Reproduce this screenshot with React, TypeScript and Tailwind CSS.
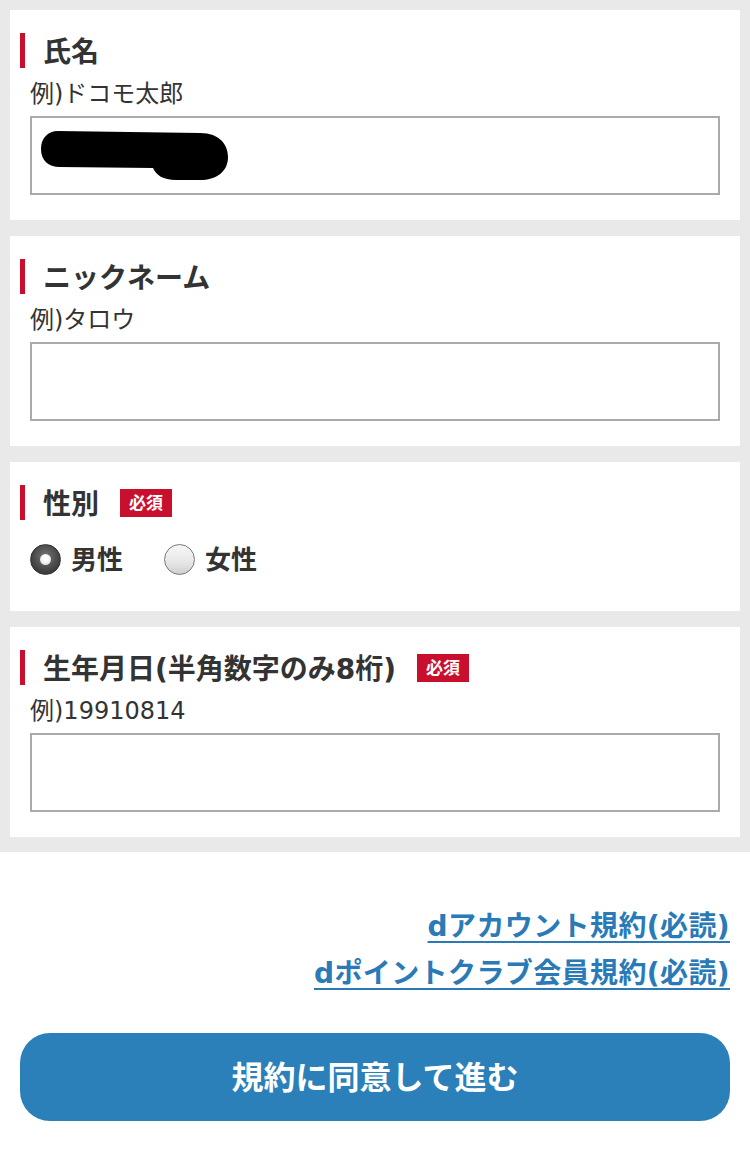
import React from "react";

const font = { fontFamily: '"DejaVu Sans", "Noto Sans CJK JP", "Noto Sans", sans-serif' };

function Title({ text, required }: { text: string; required?: boolean }) {
  return (
    <div className="flex h-[35px] items-center">
      <div className="h-[35px] w-[5px] bg-[#c8102e]" />
      <div className="ml-[18px] pt-[5px] text-[28px] font-bold leading-[30px] text-[#333]">{text}</div>
      {required && (
        <div className="ml-[21px] flex h-[28px] w-[52px] items-center justify-center bg-[#c8102e] pt-[2px] text-[17px] font-bold text-white">
          必須
        </div>
      )}
    </div>
  );
}

function Example({ text }: { text: string }) {
  return <div className="mt-[14px] pl-[10px] text-[24px] leading-[25px] text-[#333]">{text}</div>;
}

function Input({ children }: { children?: React.ReactNode }) {
  return (
    <div className="mx-[10px] mt-[9px] flex h-[79px] items-center border-2 border-[#aaaaaa] bg-white pl-[8px]">
      {children}
    </div>
  );
}

function Radio({ checked, label }: { checked?: boolean; label: string }) {
  return (
    <div className="flex h-[32px] items-center">
      {checked ? (
        <div className="flex h-[31px] w-[31px] items-center justify-center rounded-full border border-[#333] bg-[radial-gradient(circle_at_50%_40%,#777_0%,#444_60%,#2a2a2a_100%)]">
          <div className="h-[11px] w-[11px] rounded-full bg-[radial-gradient(circle_at_50%_40%,#fff_30%,#ccc_100%)]" />
        </div>
      ) : (
        <div className="h-[31px] w-[31px] rounded-full border border-[#777] bg-[linear-gradient(180deg,#f7f7f7_0%,#e6e6e6_60%,#cfcfcf_100%)]" />
      )}
      <span className="ml-[10px] pt-[1px] text-[26px] font-bold leading-[30px] text-[#333]">{label}</span>
    </div>
  );
}

export default function App() {
  return (
    <div style={font} className="w-[750px] min-h-[1167px] bg-white">
      <div className="flex flex-col gap-[16px] bg-[#e9e9e9] px-[10px] pb-[15px] pt-[10px]">
        <div className="bg-white px-[10px] pb-[25px] pt-[23px]">
          <Title text="氏名" />
          <Example text="例)ドコモ太郎" />
          <Input>
            <svg width="190" height="52" viewBox="0 0 190 52">
              <path
                d="M18 1 L160 3 C180 3 188 15 188 27 C188 42 176 50 160 50 L136 50 C123 50 116 45 113 38 L20 37 C8 37 1 30 1 19 C1 8 8 1 18 1 Z"
                fill="#000"
              />
            </svg>
          </Input>
        </div>
        <div className="bg-white px-[10px] pb-[25px] pt-[23px]">
          <Title text="ニックネーム" />
          <Example text="例)タロウ" />
          <Input />
        </div>
        <div className="bg-white px-[10px] pb-[36px] pt-[23px]">
          <Title text="性別" required />
          <div className="mt-[23px] flex items-center gap-[41px] pl-[10px]">
            <Radio checked label="男性" />
            <Radio label="女性" />
          </div>
        </div>
        <div className="bg-white px-[10px] pb-[25px] pt-[23px]">
          <Title text="生年月日(半角数字のみ8桁)" required />
          <Example text="例)19910814" />
          <Input />
        </div>
      </div>
      <div className="flex flex-col items-end px-[20px] pt-[51px]">
        <a className="text-[28px] font-bold leading-[47px] tracking-[0.4px] text-[#2a7ab8] underline decoration-2 underline-offset-[5px]">
          dアカウント規約(必読)
        </a>
        <a className="text-[28px] font-bold leading-[47px] tracking-[0.4px] text-[#2a7ab8] underline decoration-2 underline-offset-[5px]">
          dポイントクラブ会員規約(必読)
        </a>
      </div>
      <div className="px-[20px] pt-[36px]">
        <div className="flex h-[88px] items-center justify-center rounded-[30px] bg-[#2b80ba] pt-[2px] text-[32px] font-bold text-white">
          規約に同意して進む
        </div>
      </div>
    </div>
  );
}
